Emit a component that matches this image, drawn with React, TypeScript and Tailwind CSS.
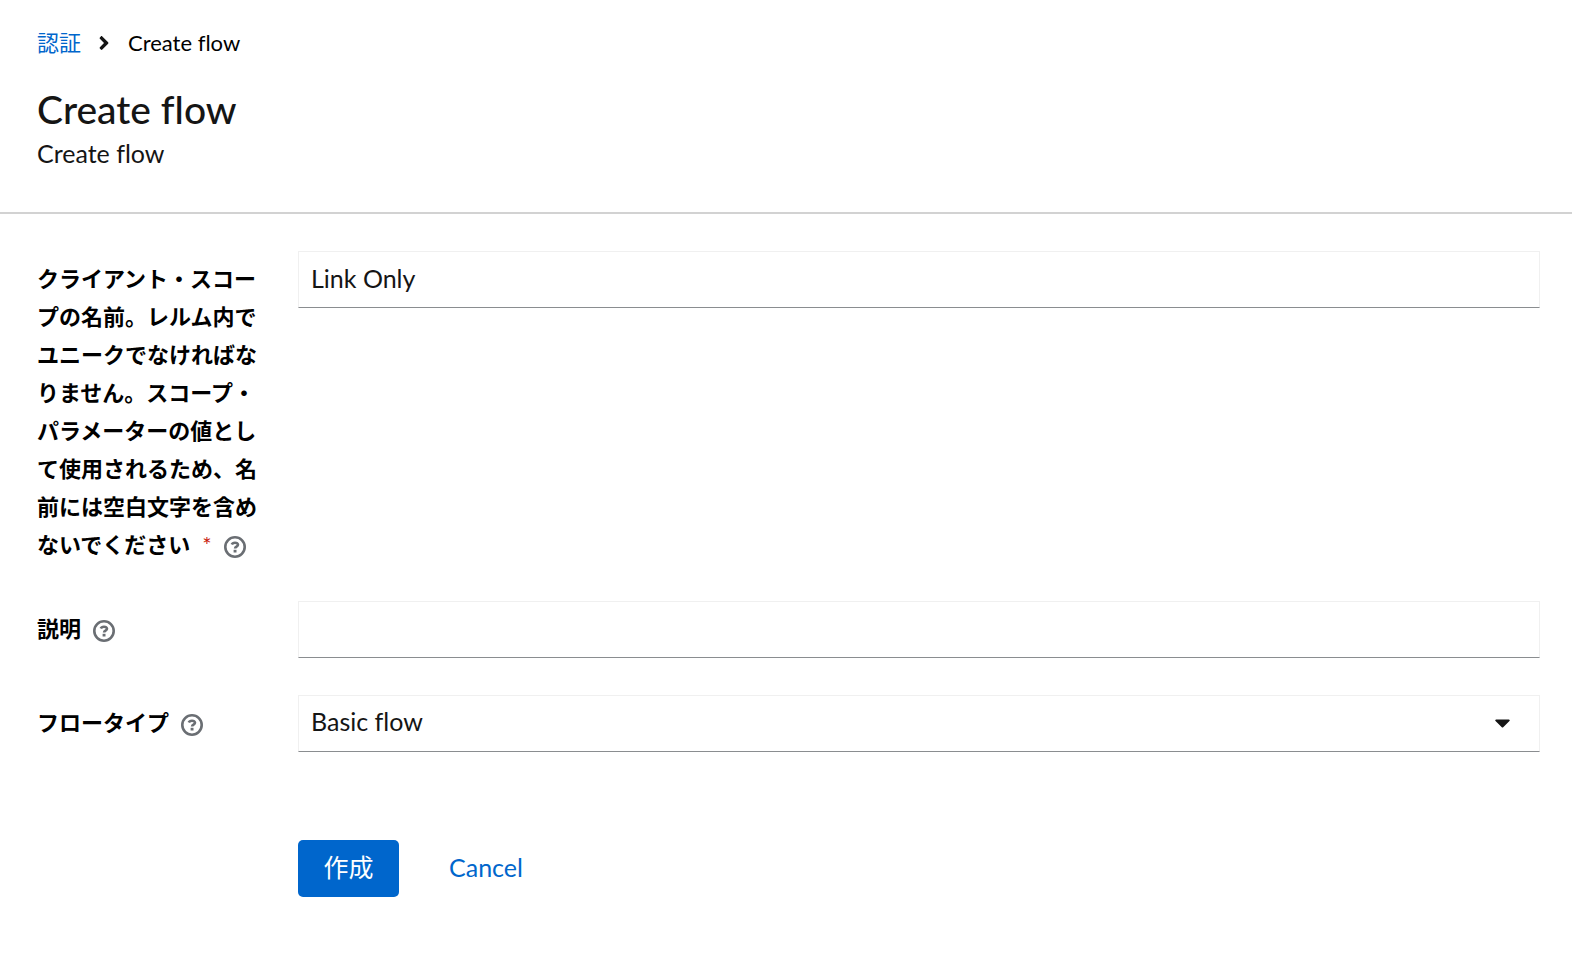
import { ReactNode } from 'react';
import { FaAngleRight, FaCaretDown } from 'react-icons/fa';

interface FieldRowProps {
  id: string;
  label: string;
  required?: boolean;
  children: ReactNode;
}

const fieldStyles =
  'block w-full h-[57px] rounded-none border border-[#f0f0f0] border-b-[#8a8d90] bg-white px-3 pb-[3px] text-[25px] text-[#151515] outline-none';

function HelpIcon() {
  return (
    <svg viewBox="0 0 22 22" className="w-[22px] h-[22px]" fill="none" stroke="currentColor" aria-hidden="true">
      <circle cx="11" cy="11" r="9.7" strokeWidth="2.6" />
      <path d="M7.8 8.5C8.3 7.2 9.5 6.7 11 6.7c1.8 0 3 .8 3 2.1 0 1.8-2.9 1.8-2.9 3.6" strokeWidth="2.6" />
      <rect x="9.6" y="13.8" width="2.9" height="2.7" fill="currentColor" stroke="none" />
    </svg>
  );
}

function FieldRow({ id, label, required, children }: FieldRowProps) {
  return (
    <div className="grid grid-cols-[236px_1fr] gap-x-[25px]">
      <div className="pt-[9px] text-[22px] leading-[38px]">
        <label htmlFor={id} className="font-bold text-black">{label}</label>
        {required && <span className="ml-3 text-[#c9190b]" aria-hidden="true">*</span>}
        <button type="button" aria-label="Help" className="ml-3 align-middle text-[#6a6e73]">
          <HelpIcon />
        </button>
      </div>
      <div>{children}</div>
    </div>
  );
}

export default function App() {
  return (
    <div className="min-h-screen bg-white font-['Lato','Noto_Sans_CJK_JP',sans-serif] text-[#151515] [font-variant-ligatures:none]">
      {/* Page header */}
      <header className="border-b-2 border-[#d2d2d2] px-[37px] pt-6 pb-10">
        <nav aria-label="Breadcrumb" className="flex items-center text-[22px] leading-[38px]">
          <a href="#authentication" className="text-[#0066cc]">認証</a>
          <FaAngleRight className="ml-3 mr-[13px] text-[22px]" aria-hidden="true" />
          <span className="text-black">Create flow</span>
        </nav>
        <h1 className="mt-[22px] text-[39px] leading-[50px] font-medium">Create flow</h1>
        <p className="text-[25px] leading-[38px]">Create flow</p>
      </header>

      {/* Form */}
      <form className="flex flex-col gap-[37px] py-[37px] pl-[37px] pr-8" onSubmit={(e) => e.preventDefault()}>
        <FieldRow
          id="name"
          label="クライアント・スコープの名前。レルム内でユニークでなければなりません。スコープ・パラメーターの値として使用されるため、名前には空白文字を含めないでください"
          required
        >
          <input id="name" type="text" defaultValue="Link Only" className={fieldStyles} />
        </FieldRow>
        <FieldRow id="description" label="説明">
          <input id="description" type="text" className={fieldStyles} />
        </FieldRow>
        <FieldRow id="flow-type" label="フロータイプ">
          <div className="relative">
            <select id="flow-type" className={`${fieldStyles} appearance-none`}>
              <option>Basic flow</option>
            </select>
            <FaCaretDown className="pointer-events-none absolute right-[25px] top-[15px] text-[25px]" aria-hidden="true" />
          </div>
        </FieldRow>

        <div className="mt-[51px] ml-[261px] flex gap-[25px] text-[25px]">
          <button type="submit" className="h-[57px] w-[101px] rounded-[5px] bg-[#0066cc] pb-[2px] text-white">作成</button>
          <button type="button" className="h-[57px] px-[25px] pb-[2px] text-[#0066cc]">Cancel</button>
        </div>
      </form>
    </div>
  );
}
